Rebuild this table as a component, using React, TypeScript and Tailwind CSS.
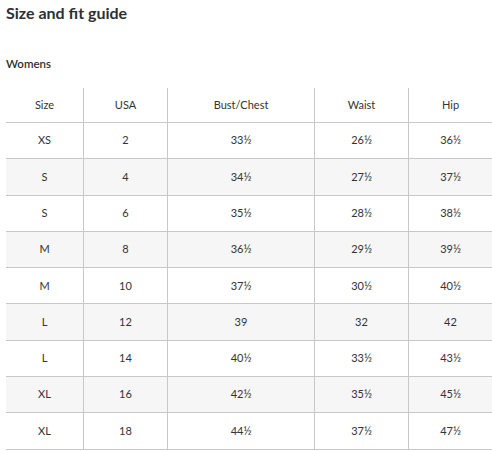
import React from "react";

const rows: string[][] = [
  ["XS", "2", "33½", "26½", "36½"],
  ["S", "4", "34½", "27½", "37½"],
  ["S", "6", "35½", "28½", "38½"],
  ["M", "8", "36½", "29½", "39½"],
  ["M", "10", "37½", "30½", "40½"],
  ["L", "12", "39", "32", "42"],
  ["L", "14", "40½", "33½", "43½"],
  ["XL", "16", "42½", "35½", "45½"],
  ["XL", "18", "44½", "37½", "47½"],
];

const headers = ["Size", "USA", "Bust/Chest", "Waist", "Hip"];

export default function App() {
  return (
    <div
      className="w-[492px] h-[451px] bg-white overflow-hidden text-[#2e2f32]"
      style={{ fontFamily: "Lato, 'Open Sans', sans-serif" }}
    >
      <div className="pl-[6px] pt-[3px]">
        <h1 className="text-[16px] leading-[20px] font-bold text-[#2e2f32]">Size and fit guide</h1>
        <div className="mt-[34px] text-[11.5px] leading-[14px] font-semibold">Womens</div>
      </div>
      <div className="ml-[6px] mt-[17px] grid grid-cols-[78px_84px_147px_94px_1fr] text-[11px] text-[#333]">
        {headers.map((h, i) => (
          <div
            key={h}
            className={`h-[35px] flex items-center justify-center border-b border-[#c8c8c8] ${
              i < 4 ? "border-r" : ""
            }`}
          >
            {h}
          </div>
        ))}
        {rows.map((r, ri) =>
          r.map((c, ci) => (
            <div
              key={`${ri}-${ci}`}
              className={`h-[36.3px] flex items-center justify-center border-b border-[#c8c8c8] ${
                ci < 4 ? "border-r" : ""
              } ${ri % 2 === 1 ? "bg-[#f6f6f6]" : "bg-white"}`}
            >
              {c}
            </div>
          ))
        )}
      </div>
    </div>
  );
}
